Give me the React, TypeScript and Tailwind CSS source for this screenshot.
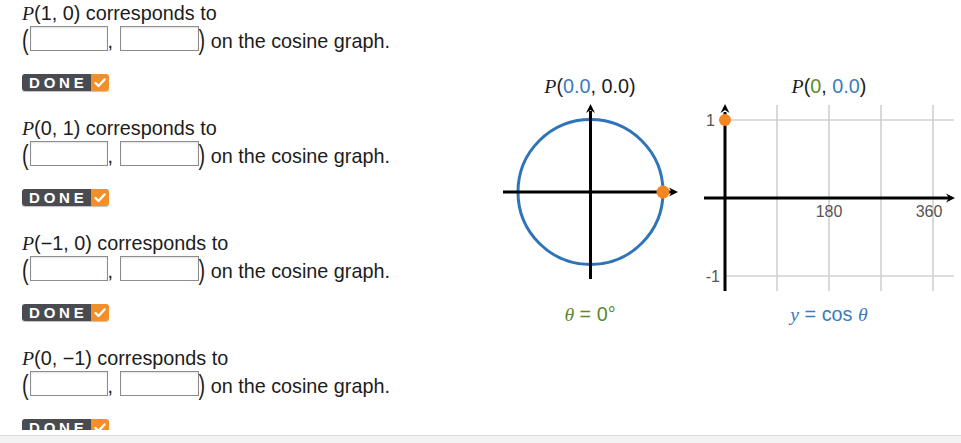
import React from 'react'

const prompts = [
    { a: '1', b: '0' },
    { a: '0', b: '1' },
    { a: '\u22121', b: '0' },
    { a: '0', b: '\u22121' },
]

const Paren = ({ ch }: { ch: string }) => (
    <span className="inline-block leading-[26px] pt-[2px] scale-y-[1.38] -translate-y-[2.5px]">{ch}</span>
)

const DoneButton = () => (
    <div className="flex h-[17px] w-[87px] overflow-hidden rounded-[3px] shadow-[0_1px_1px_rgba(0,0,0,0.25)]">
        <div className="flex h-full w-[69px] items-center overflow-hidden bg-[#4a4b51] pl-[7px] text-[15px] font-bold leading-[17px] tracking-[3.8px] text-white">
            DONE
        </div>
        <div className="flex h-full flex-1 items-center justify-center bg-[#f1902a]">
            <svg width="12" height="10" viewBox="0 0 12 10">
                <polyline points="1.5,5 4.5,8 10.5,1.5" fill="none" stroke="white" strokeWidth="2.4" strokeLinecap="round" strokeLinejoin="round" />
            </svg>
        </div>
    </div>
)

const Prompt = ({ a, b }: { a: string, b: string }) => (
    <div className="h-[115px]">
        <div className="h-[26px] leading-[26px] whitespace-pre">
            <span className="font-['Liberation_Serif',serif] italic">P</span>({a}, {b}) corresponds to
        </div>
        <div className="flex h-[26px] items-start whitespace-pre">
            <Paren ch="(" />
            <input readOnly className="ml-[1px] h-[25px] w-[78px] border border-[#8c8c8c] bg-white shadow-[inset_0_1px_2px_rgba(0,0,0,0.12)] outline-none" />
            <span className="leading-[26px] pt-[2px]">, </span>
            <input readOnly className="ml-[1px] h-[25px] w-[79px] border border-[#8c8c8c] bg-white shadow-[inset_0_1px_2px_rgba(0,0,0,0.12)] outline-none" />
            <Paren ch=")" />
            <span className="leading-[26px] pt-[2px]"> on the cosine graph.</span>
        </div>
        <div className="mt-[22px]">
            <DoneButton />
        </div>
    </div>
)

const Arrow = ({ x, y, dir }: { x: number, y: number, dir: 'right' | 'up' }) => {
    const pts = dir === 'right'
        ? `${x},${y} ${x - 9},${y - 4.5} ${x - 6},${y} ${x - 9},${y + 4.5}`
        : `${x},${y} ${x - 4.5},${y + 9} ${x},${y + 6} ${x + 4.5},${y + 9}`
    return <polygon points={pts} fill="black" />
}

const UnitCircle = () => (
    <svg width="180" height="195" viewBox="0 0 180 195">
        <circle cx="90.5" cy="92" r="72.5" fill="none" stroke="#2f74b7" strokeWidth="3" />
        <line x1="3" y1="92" x2="172" y2="92" stroke="black" strokeWidth="3" />
        <Arrow x={178} y={92} dir="right" />
        <line x1="90.5" y1="11" x2="90.5" y2="179" stroke="black" strokeWidth="3" />
        <Arrow x={90.5} y={4} dir="up" />
        <circle cx="163" cy="92" r="6.5" fill="#f4861f" />
    </svg>
)

const CosGraph = () => (
    <svg width="261" height="195" viewBox="0 0 261 195">
        <g stroke="#d0d0d0" strokeWidth="1.6">
            {[77, 129, 181, 233].map((x) => (
                <line key={x} x1={x} y1="5" x2={x} y2="191" />
            ))}
            <line x1="25" y1="20" x2="254" y2="20" />
            <line x1="25" y1="176" x2="254" y2="176" />
        </g>
        <line x1="4" y1="98" x2="249" y2="98" stroke="black" strokeWidth="3" />
        <Arrow x={255} y={98} dir="right" />
        <line x1="25" y1="12" x2="25" y2="191" stroke="black" strokeWidth="3" />
        <Arrow x={25} y={4} dir="up" />
        <g fill="#555" fontSize="16" fontFamily="'Liberation Sans', Arial, sans-serif">
            <text x="15" y="26" textAnchor="end">1</text>
            <text x="20" y="182" textAnchor="end">-1</text>
            <text x="129" y="117" textAnchor="middle">180</text>
            <text x="229" y="117" textAnchor="middle">360</text>
        </g>
        <circle cx="25" cy="20" r="6" fill="#f4861f" />
    </svg>
)

export default function App() {
    return (
        <div className="flex h-[443px] w-[961px] flex-col overflow-hidden bg-white font-['Liberation_Sans',Arial,sans-serif] text-[19.8px] text-[#1c1c1c]">
            <div className="flex h-[430px] overflow-hidden">
                <div className="w-[500px] pl-[22px]">
                    {prompts.map((p, i) => (
                        <Prompt key={i} a={p.a} b={p.b} />
                    ))}
                </div>
                <div className="flex gap-[20px] pt-[73px]">
                    <div className="flex w-[180px] flex-col items-center">
                        <div className="h-[26px] leading-[26px] whitespace-pre">
                            <span className="font-['Liberation_Serif',serif] italic">P</span>(<span className="text-[#3a7cbd]">0.0</span>, 0.0)
                        </div>
                        <div className="mt-[1px]">
                            <UnitCircle />
                        </div>
                        <div className="mt-[6px] h-[26px] leading-[26px] text-[#5b8c2a]">
                            <span className="font-['Liberation_Serif',serif] italic">θ</span> = 0°
                        </div>
                    </div>
                    <div className="flex w-[261px] flex-col">
                        <div className="h-[26px] w-[258px] text-center leading-[26px] whitespace-pre">
                            <span className="font-['Liberation_Serif',serif] italic">P</span>(<span className="text-[#5b8c2a]">0</span>, <span className="text-[#3a7cbd]">0.0</span>)
                        </div>
                        <div className="mt-[1px]">
                            <CosGraph />
                        </div>
                        <div className="mt-[6px] h-[26px] w-[258px] text-center leading-[26px] text-[#3a7cbd]">
                            <span className="font-['Liberation_Serif',serif] italic">y</span> = cos <span className="font-['Liberation_Serif',serif] italic">θ</span>
                        </div>
                    </div>
                </div>
            </div>
            <div className="h-[5px]" />
            <div className="flex-1 border-t border-[#dcdcdc] bg-[#f3f3f3]" />
        </div>
    )
}
